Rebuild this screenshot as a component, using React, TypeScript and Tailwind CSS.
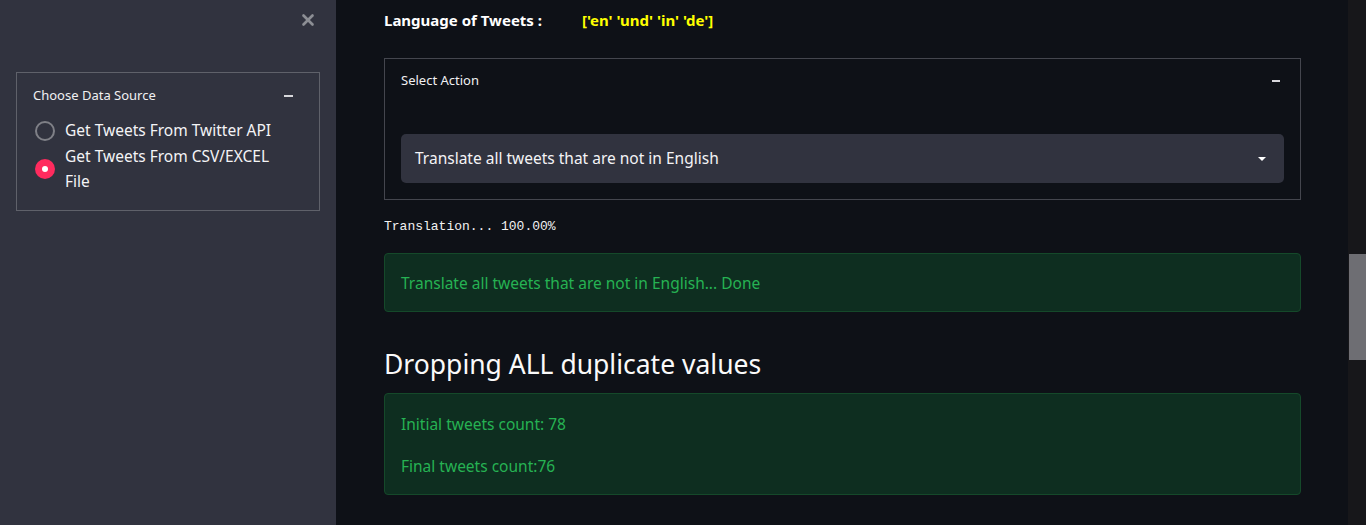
import React from "react";
import { X } from "lucide-react";

const font = { fontFamily: '"Noto Sans", Roboto, sans-serif' };

const Sidebar: React.FC = () => (
  <aside className="w-[336px] shrink-0 bg-[#31333f] h-[525px] relative">
    <button className="absolute left-[299px] top-[11px] text-[#8c8e94]">
      <X size={18} strokeWidth={3.5} />
    </button>
    <div className="pt-[72px] px-4">
      <div className="border border-[#5f616a] h-[139px] pl-4 pr-4">
        <div className="flex items-center justify-between h-[45px] text-[13px] text-[#f0f0f2]">
          <span>Choose Data Source</span>
          <span className="w-[9px] h-[2px] bg-[#d8d8dc] mr-[10px]" />
        </div>
        <div className="flex flex-col">
          <label className="flex items-center gap-[10px] h-[26px] pl-[2px]">
            <span className="w-[20px] h-[20px] rounded-full border-2 border-[#7f8087] shrink-0" />
            <span className="text-[15.5px] text-[#f4f4f6]">Get Tweets From Twitter API</span>
          </label>
          <label className="flex items-center gap-[10px] pl-[2px]">
            <span className="w-[20px] h-[20px] rounded-full bg-[#ff2b5e] shrink-0 flex items-center justify-center">
              <span className="w-[6px] h-[6px] rounded-full bg-white" />
            </span>
            <span className="text-[15.5px] leading-[25px] text-[#f4f4f6] w-[215px]">
              Get Tweets From CSV/EXCEL File
            </span>
          </label>
        </div>
      </div>
    </div>
  </aside>
);

const SuccessBox: React.FC<{ children: React.ReactNode; className?: string }> = ({ children, className }) => (
  <div className={`border border-[#15492a] bg-[#0e2e20] rounded-[4px] px-4 text-[15.5px] text-[#26b253] ${className ?? ""}`}>
    {children}
  </div>
);

export default function App() {
  return (
    <div className="flex w-[1366px] h-[525px] overflow-hidden bg-[#0e1117]" style={font}>
      <Sidebar />
      <main className="flex-1 pl-12 pr-[47px]">
        <div className="flex items-center h-[40px] text-[15px] font-bold">
          <span className="text-white w-[198px]">Language of Tweets :</span>
          <span className="text-[#ffff00]">['en' 'und' 'in' 'de']</span>
        </div>

        <div className="mt-[18px] border border-[#44464e] h-[142px] px-4">
          <div className="flex items-center justify-between h-[44px] text-[13px] text-[#f0f0f2]">
            <span>Select Action</span>
            <span className="w-[8px] h-[2px] bg-[#d8d8dc] mr-[4px]" />
          </div>
          <div className="mt-[31px] h-[49px] rounded-[5px] bg-[#31333f] flex items-center justify-between px-[14px]">
            <span className="text-[15.5px] text-[#f4f4f6]">Translate all tweets that are not in English</span>
            <svg width="10" height="6" viewBox="0 0 10 6" className="mr-[3px]">
              <path d="M1 1h8L5 5z" fill="#ffffff" />
            </svg>
          </div>
        </div>

        <div
          className="mt-[17px] h-[20px] flex items-center text-[13px] text-[#f2f2f2]"
          style={{ fontFamily: '"Liberation Mono", "DejaVu Sans Mono", monospace' }}
        >
          Translation... 100.00%
        </div>

        <SuccessBox className="mt-[16px] h-[59px] pt-[3px] flex items-center">
          Translate all tweets that are not in English... Done
        </SuccessBox>

        <h2 className="mt-[32px] text-[26.5px] leading-[40px] text-[#fafafa]">Dropping ALL duplicate values</h2>

        <SuccessBox className="mt-[9px] h-[102px] pt-[1px] flex flex-col justify-center gap-[20px]">
          <p className="leading-[22px]">Initial tweets count: 78</p>
          <p className="leading-[22px]">Final tweets count:76</p>
        </SuccessBox>
      </main>
      <div className="w-[18px] shrink-0 bg-[#17171a] relative">
        <div className="absolute left-[1px] right-0 top-[254px] h-[106px] bg-[#6e6e73]" />
      </div>
    </div>
  );
}
